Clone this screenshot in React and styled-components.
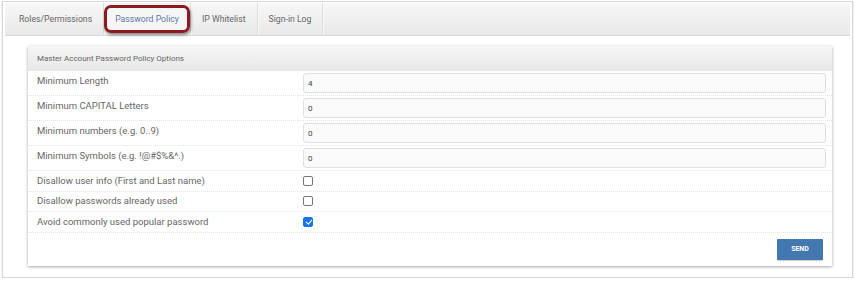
import styled, { createGlobalStyle } from 'styled-components'

const GlobalStyle = createGlobalStyle`
  body {
    margin: 0;
    background: #fff;
    font-family: Roboto, "Liberation Sans", sans-serif;
  }
`

const tabs = ['Roles/Permissions', 'Password Policy', 'IP Whitelist', 'Sign-in Log']

const numberFields = [
  { label: 'Minimum Length', value: '4' },
  { label: 'Minimum CAPITAL Letters', value: '0' },
  { label: 'Minimum numbers (e.g. 0..9)', value: '0' },
  { label: 'Minimum Symbols (e.g. !@#$%&^.)', value: '0' },
]

const checkFields = [
  { label: 'Disallow user info (First and Last name)', checked: false },
  { label: 'Disallow passwords already used', checked: false },
  { label: 'Avoid commonly used popular password', checked: true },
]

const App = () => (
  <>
    <GlobalStyle />
    <Frame>
      <TabBar>
        {tabs.map(t => (
          <Tab key={t} $active={t === 'Password Policy'}>{t}</Tab>
        ))}
      </TabBar>
      <Content>
        <Card>
          <CardHeader>Master Account Password Policy Options</CardHeader>
          {numberFields.map(f => (
            <FieldRow key={f.label}>
              <Label>{f.label}</Label>
              <Input defaultValue={f.value} />
            </FieldRow>
          ))}
          {checkFields.map(f => (
            <CheckRow key={f.label}>
              <Label>{f.label}</Label>
              <Check type="checkbox" defaultChecked={f.checked} />
            </CheckRow>
          ))}
          <Footer>
            <SendButton>SEND</SendButton>
          </Footer>
        </Card>
      </Content>
    </Frame>
  </>
)

const Frame = styled.div`
  margin: 1px 2px 0 2px;
  height: 277px;
  border: 1px solid #d6d6d6;
  box-shadow: 0 1px 1px rgba(0, 0, 0, 0.25);
  background: #fff;
  padding: 1px 2px 0 2px;
  box-sizing: border-box;
`

const TabBar = styled.div`
  display: flex;
  height: 32px;
  padding-left: 3px;
  background: linear-gradient(#f7f7f7, #e9e9e9);
  border-bottom: 1px solid #dadada;
`

const Tab = styled.div`
  position: relative;
  display: flex;
  align-items: center;
  padding: 0 11px;
  font-size: 8.7px;
  color: ${({ $active }) => ($active ? '#5a78a8' : '#666')};
  border-right: 1px solid #dcdcdc;
  box-shadow: 1px 0 0 #f8f8f8;
  background: ${({ $active }) => ($active ? '#f6f6f6' : 'transparent')};

  ${({ $active }) => $active && `
    &::after {
      content: '';
      position: absolute;
      top: 2px;
      bottom: 2px;
      left: 0;
      right: 0;
      border: 3px solid #8c1b1f;
      border-radius: 7px;
      box-shadow: 1px 2px 3px rgba(0, 0, 0, 0.45);
    }
  `}
`

const Content = styled.div`
  padding: 10px 18px 0 23px;
`

const Card = styled.div`
  background: #fff;
  box-shadow: 0 1px 3px rgba(0, 0, 0, 0.35);
`

const CardHeader = styled.div`
  height: 25px;
  display: flex;
  align-items: center;
  padding-left: 9px;
  font-size: 8px;
  color: #666;
  background: linear-gradient(#f6f6f6, #e7e7e7);
`

const Row = styled.div`
  display: grid;
  grid-template-columns: 266px 1fr;
  padding: 0 6px 0 9px;
  border-bottom: 1px dotted #e4e4e4;
  box-sizing: border-box;
`

const FieldRow = styled(Row)`
  height: 25px;
  align-items: center;
`

const CheckRow = styled(Row)`
  height: 20.5px;
  align-items: center;
`

const Label = styled.span`
  font-size: 9.5px;
  color: #666;
  line-height: 14px;
  ${FieldRow} & {
    align-self: start;
    padding-top: 3px;
  }
`

const Input = styled.input`
  height: 20px;
  box-sizing: border-box;
  border: 1px solid #e0e0e0;
  border-radius: 3px;
  background: #fafafa;
  padding: 0 4px;
  font-family: Roboto, "Liberation Sans", sans-serif;
  font-size: 8px;
  color: #444;
  outline: none;
`

const Check = styled.input`
  appearance: none;
  margin: 0;
  width: 10px;
  height: 10px;
  border: 1px solid #777;
  border-radius: 2px;
  background: #fff;
  box-sizing: border-box;
  position: relative;

  &:checked {
    background: #1a73e8;
    border-color: #1a73e8;
  }

  &:checked::after {
    content: '';
    position: absolute;
    left: 2.5px;
    top: 0.5px;
    width: 2.5px;
    height: 5px;
    border: solid #fff;
    border-width: 0 1.5px 1.5px 0;
    transform: rotate(40deg);
  }
`

const Footer = styled.div`
  display: flex;
  justify-content: flex-end;
  padding: 6px 9px 6px 0;
`

const SendButton = styled.button`
  width: 46px;
  height: 21px;
  border: none;
  border-radius: 1px;
  background: #4377b0;
  color: #fff;
  font-family: Roboto, "Liberation Sans", sans-serif;
  font-weight: bold;
  font-size: 7px;
  box-shadow: 0 1px 1px rgba(0, 0, 0, 0.2);
  padding: 0;
`

export default App
